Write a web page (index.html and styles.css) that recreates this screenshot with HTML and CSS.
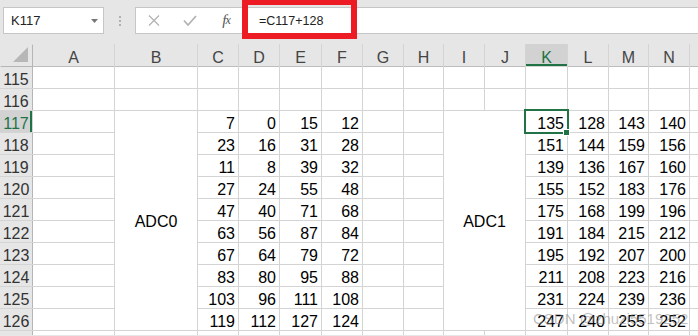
FILE: index.html
```html
<!doctype html>
<html lang="en">
<head>
    <meta charset="utf-8">
    <title>ADC sheet</title>
    <link rel="stylesheet" href="styles.css">
</head>
<body>

<div class="toolbar">
    <div class="name-box">
        <span>K117</span>
        <svg class="caret" width="7" height="4" viewBox="0 0 7 4"><path d="M0 0h7L3.5 4z" fill="#777"/></svg>
    </div>
    <div class="dots"><span></span><span></span><span></span></div>
    <div class="formula">
        <span class="fbtn">
            <svg width="12" height="11" viewBox="0 0 12 11"><path d="M1 .5l10 10M11 .5l-10 10" stroke="#b4b4b4" stroke-width="1.3" fill="none"/></svg>
        </span>
        <span class="fbtn">
            <svg width="14" height="11" viewBox="0 0 14 11"><path d="M1 5.5l4 4.5L13 1" stroke="#b4b4b4" stroke-width="1.8" fill="none"/></svg>
        </span>
        <span class="fbtn fx"><i>f</i><i class="x">x</i></span>
        <span class="formula-text">=C117+128</span>
    </div>
</div>

<div class="mark"></div>

<div class="sheet">
    <div class="corner"><svg width="15" height="15" viewBox="0 0 15 15"><path d="M15 0v15H0z" fill="#b7b7b7"/></svg></div>
    <div class="ch">A</div><div class="ch">B</div><div class="ch">C</div><div class="ch">D</div><div class="ch">E</div><div class="ch">F</div><div class="ch">G</div><div class="ch">H</div><div class="ch">I</div><div class="ch">J</div><div class="ch on">K</div><div class="ch">L</div><div class="ch">M</div><div class="ch">N</div><div class="ch"></div>

    <div class="rh">115</div><div class="c"></div><div class="c"></div><div class="c"></div><div class="c"></div><div class="c"></div><div class="c"></div><div class="c"></div><div class="c"></div><div class="c"></div><div class="c"></div><div class="c"></div><div class="c"></div><div class="c"></div><div class="c"></div><div class="c"></div>
    <div class="rh">116</div><div class="c"></div><div class="c"></div><div class="c"></div><div class="c"></div><div class="c"></div><div class="c"></div><div class="c"></div><div class="c"></div><div class="c"></div><div class="c"></div><div class="c"></div><div class="c"></div><div class="c"></div><div class="c"></div><div class="c"></div>

    <div class="rh on">117</div><div class="c"></div>
    <div class="c merge adc0">ADC0</div>
    <div class="c n">7</div><div class="c n">0</div><div class="c n">15</div><div class="c n">12</div><div class="c"></div><div class="c"></div>
    <div class="c merge adc1">ADC1</div>
    <div class="c n sel">135</div><div class="c n">128</div><div class="c n">143</div><div class="c n">140</div><div class="c"></div>

    <div class="rh">118</div><div class="c"></div><div class="c n">23</div><div class="c n">16</div><div class="c n">31</div><div class="c n">28</div><div class="c"></div><div class="c"></div><div class="c n">151</div><div class="c n">144</div><div class="c n">159</div><div class="c n">156</div><div class="c"></div>
    <div class="rh">119</div><div class="c"></div><div class="c n">11</div><div class="c n">8</div><div class="c n">39</div><div class="c n">32</div><div class="c"></div><div class="c"></div><div class="c n">139</div><div class="c n">136</div><div class="c n">167</div><div class="c n">160</div><div class="c"></div>
    <div class="rh">120</div><div class="c"></div><div class="c n">27</div><div class="c n">24</div><div class="c n">55</div><div class="c n">48</div><div class="c"></div><div class="c"></div><div class="c n">155</div><div class="c n">152</div><div class="c n">183</div><div class="c n">176</div><div class="c"></div>
    <div class="rh">121</div><div class="c"></div><div class="c n">47</div><div class="c n">40</div><div class="c n">71</div><div class="c n">68</div><div class="c"></div><div class="c"></div><div class="c n">175</div><div class="c n">168</div><div class="c n">199</div><div class="c n">196</div><div class="c"></div>
    <div class="rh">122</div><div class="c"></div><div class="c n">63</div><div class="c n">56</div><div class="c n">87</div><div class="c n">84</div><div class="c"></div><div class="c"></div><div class="c n">191</div><div class="c n">184</div><div class="c n">215</div><div class="c n">212</div><div class="c"></div>
    <div class="rh">123</div><div class="c"></div><div class="c n">67</div><div class="c n">64</div><div class="c n">79</div><div class="c n">72</div><div class="c"></div><div class="c"></div><div class="c n">195</div><div class="c n">192</div><div class="c n">207</div><div class="c n">200</div><div class="c"></div>
    <div class="rh">124</div><div class="c"></div><div class="c n">83</div><div class="c n">80</div><div class="c n">95</div><div class="c n">88</div><div class="c"></div><div class="c"></div><div class="c n">211</div><div class="c n">208</div><div class="c n">223</div><div class="c n">216</div><div class="c"></div>
    <div class="rh">125</div><div class="c"></div><div class="c n">103</div><div class="c n">96</div><div class="c n">111</div><div class="c n">108</div><div class="c"></div><div class="c"></div><div class="c n">231</div><div class="c n">224</div><div class="c n">239</div><div class="c n">236</div><div class="c"></div>
    <div class="rh">126</div><div class="c"></div><div class="c n">119</div><div class="c n">112</div><div class="c n">127</div><div class="c n">124</div><div class="c"></div><div class="c"></div><div class="c n">247</div><div class="c n">240</div><div class="c n">255</div><div class="c n">252</div><div class="c"></div>

    <div class="rh"></div><div class="c"></div><div class="c"></div><div class="c"></div><div class="c"></div><div class="c"></div><div class="c"></div><div class="c"></div><div class="c"></div><div class="c"></div><div class="c"></div><div class="c"></div><div class="c"></div><div class="c"></div><div class="c"></div><div class="c"></div>
</div>

<div class="watermark">CSDN @zhuzi5519252</div>

</body>
</html>
```

FILE: styles.css
```css
html, body {
    margin: 0;
    padding: 0;
    color: #000;
    background: #e6e6e6;
    font-family: "Liberation Sans", Arial, sans-serif;
}

body {
    position: relative;
    width: 698px;
    height: 336px;
    overflow: hidden;
}

/* formula bar */
.toolbar {
    display: flex;
    height: 44px;
    box-sizing: border-box;
    padding: 7px 0 0 3px;
}
.name-box {
    width: 101px;
    height: 27px;
    box-sizing: border-box;
    border: 1px solid #c6c6c6;
    background: #fff;
    display: flex;
    align-items: center;
    justify-content: space-between;
    padding: 0 5px 0 7px;
    font-size: 13px;
    color: #222;
}
.dots {
    width: 31px;
    height: 27px;
    display: flex;
    flex-direction: column;
    align-items: center;
    justify-content: center;
    gap: 2px;
}
    .dots span {
        width: 2px;
        height: 2px;
        background: #b0b0b0;
    }
.formula {
    flex: 1;
    height: 27px;
    margin-right: -2px;
    box-sizing: border-box;
    border: 1px solid #c6c6c6;
    border-right: 0;
    background: #fff;
    display: flex;
    align-items: center;
}
    .fbtn {
        width: 36px;
        display: flex;
        justify-content: center;
        align-items: center;
    }
    .fx {
        font-family: "Liberation Serif", serif;
        font-size: 15px;
        color: #555;
        letter-spacing: -1px;
    }
        .fx .x {
            font-size: 12px;
        }
    .formula-text {
        padding-left: 15px;
        font-size: 12.5px;
        color: #222;
    }

.mark {
    position: absolute;
    left: 242px;
    top: -1px;
    width: 115px;
    height: 40px;
    box-sizing: border-box;
    border: 6px solid #ed1c24;
}

/* grid */
.sheet {
    display: grid;
    grid-template-columns: 32px 81px 82px 40px 40px 41px 40px 40px 39px 40px 40px 41px 40px 39px 40px 40px;
    grid-template-rows: 22px repeat(12, 21px) 4px;
    gap: 1px;
    background: #d4d4d4;
    font-size: 16px;
}
.corner {
    background: #e6e6e6;
    display: flex;
    align-items: flex-end;
    justify-content: flex-end;
    padding: 0 4px 4px 0;
    box-shadow: 1px 1px 0 #b5b5b5;
}
.ch {
    background: #e6e6e6;
    color: #444;
    text-align: center;
    line-height: 27px;
    box-shadow: 0 1px 0 #bdbdbd;
}
.rh {
    background: #e6e6e6;
    color: #333;
    text-align: center;
    line-height: 26px;
    box-shadow: 1px 0 0 #b5b5b5;
}
    .ch.on, .rh.on {
        background: #d2d2d2;
        color: #217346;
    }
    .ch.on {box-shadow: inset 0 -2px 0 #217346;}
    .rh.on {box-shadow: inset -2px 0 0 #217346;}

.c {
    background: #fff;
}
.n {
    text-align: right;
    padding-right: 3px;
    line-height: 25px;
}
.merge {
    display: flex;
    align-items: center;
    justify-content: center;
    padding-top: 2px;
}
.adc0 {
    grid-column: 3;
    grid-row: 4 / span 10;
}
.adc1 {
    grid-column: 10 / span 2;
    grid-row: 4 / span 10;
}

.sel {
    position: relative;
}
    .sel::before {
        content: "";
        position: absolute;
        top: -2px;
        left: -2px;
        right: -2px;
        bottom: -2px;
        border: 2px solid #217346;
    }
    .sel::after {
        content: "";
        position: absolute;
        right: -3px;
        bottom: -4px;
        width: 5px;
        height: 5px;
        background: #217346;
        border: 1px solid #fff;
    }

.watermark {
    position: absolute;
    left: 533px;
    top: 310px;
    font-size: 15px;
    color: rgba(140, 140, 140, 0.55);
}
```
